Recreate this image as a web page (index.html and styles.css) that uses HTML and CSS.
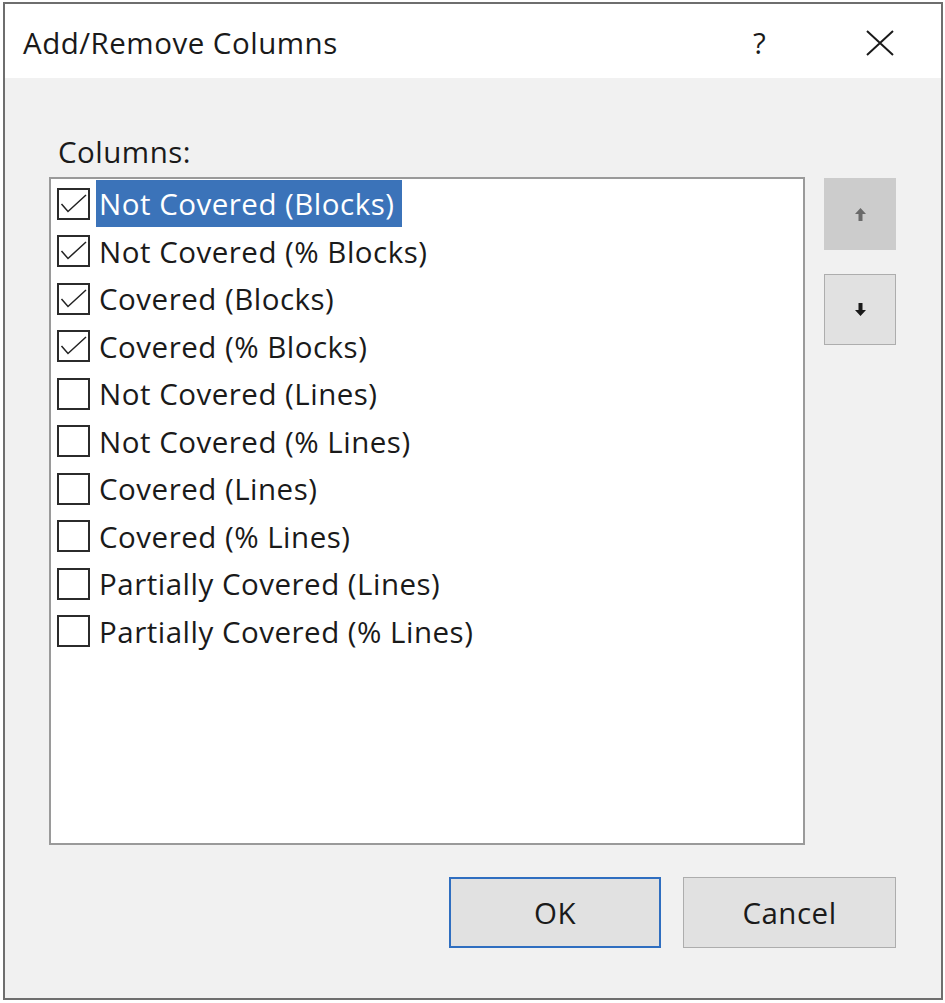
FILE: index.html
```html
<!DOCTYPE html>
<html>
<head>
<meta charset="utf-8">
<title>Add/Remove Columns</title>
<link rel="stylesheet" href="styles.css">
</head>
<body>
<div class="window">
  <div class="titlebar">
    <div class="title">Add/Remove Columns</div>
    <div class="help">?</div>
    <div class="close">
      <svg width="28" height="26" viewBox="0 0 28 26"><path d="M1 1 L27 25 M27 1 L1 25" stroke="#1a1a1a" stroke-width="2" fill="none"/></svg>
    </div>
  </div>
  <div class="content">
    <div class="label">Columns:</div>
    <div class="main">
      <div class="list">
        <div class="row"><span class="box checked"><svg viewBox="0 0 33 32" width="33" height="32"><polyline points="4.5,16 11,23.5 29,7" fill="none" stroke="#222" stroke-width="1.5"/></svg></span><span class="text selected">Not Covered (Blocks)</span></div>
        <div class="row"><span class="box checked"><svg viewBox="0 0 33 32" width="33" height="32"><polyline points="4.5,16 11,23.5 29,7" fill="none" stroke="#222" stroke-width="1.5"/></svg></span><span class="text">Not Covered (% Blocks)</span></div>
        <div class="row"><span class="box checked"><svg viewBox="0 0 33 32" width="33" height="32"><polyline points="4.5,16 11,23.5 29,7" fill="none" stroke="#222" stroke-width="1.5"/></svg></span><span class="text">Covered (Blocks)</span></div>
        <div class="row"><span class="box checked"><svg viewBox="0 0 33 32" width="33" height="32"><polyline points="4.5,16 11,23.5 29,7" fill="none" stroke="#222" stroke-width="1.5"/></svg></span><span class="text">Covered (% Blocks)</span></div>
        <div class="row"><span class="box"></span><span class="text">Not Covered (Lines)</span></div>
        <div class="row"><span class="box"></span><span class="text">Not Covered (% Lines)</span></div>
        <div class="row"><span class="box"></span><span class="text">Covered (Lines)</span></div>
        <div class="row"><span class="box"></span><span class="text">Covered (% Lines)</span></div>
        <div class="row"><span class="box"></span><span class="text">Partially Covered (Lines)</span></div>
        <div class="row"><span class="box"></span><span class="text">Partially Covered (% Lines)</span></div>
      </div>
      <div class="side">
        <div class="move up">
          <svg width="11" height="13" viewBox="0 0 11 13"><polygon points="5.5,0 11,6 7.5,6 7.5,13 3.5,13 3.5,6 0,6" fill="#6a6a6a"/></svg>
        </div>
        <div class="move down">
          <svg width="11" height="13" viewBox="0 0 11 13"><polygon points="5.5,13 11,7 7.5,7 7.5,0 3.5,0 3.5,7 0,7" fill="#1a1a1a"/></svg>
        </div>
      </div>
    </div>
    <div class="footer">
      <div class="btn ok">OK</div>
      <div class="btn">Cancel</div>
    </div>
  </div>
</div>
</body>
</html>
```

FILE: styles.css
```css
html, body {
  margin: 0;
  padding: 0;
  background: #ffffff;
}
body {
  font-family: "Open Sans", "Noto Sans", sans-serif;
  color: #1a1a1a;
  font-size: 29.5px;
  letter-spacing: 0.5px;
}
.window {
  margin: 2px 0 0 3px;
  width: 940px;
  height: 998px;
  box-sizing: border-box;
  border: 2px solid #6e6e6e;
  display: flex;
  flex-direction: column;
}
.titlebar {
  height: 74px;
  background: #ffffff;
  display: flex;
  align-items: center;
  padding-left: 18px;
}
.title {
  flex: 1;
  padding-top: 2px;
}
.help {
  width: 113px;
  padding-top: 2px;
}
.close {
  width: 75px;
  display: flex;
  padding-top: 4px;
}
.content {
  flex: 1;
  background: #f1f1f1;
  padding-left: 44px;
  display: flex;
  flex-direction: column;
}
.label {
  margin-top: 54px;
  height: 40px;
  line-height: 40px;
  padding-left: 9px;
}
.main {
  margin-top: 5px;
  display: flex;
  gap: 19px;
}
.list {
  width: 756px;
  height: 668px;
  box-sizing: border-box;
  border: 2px solid #9a9a9a;
  background: #ffffff;
  padding: 1px 0 0 6px;
}
.row {
  height: 47.5px;
  display: flex;
  align-items: center;
}
.box {
  width: 33px;
  height: 32px;
  box-sizing: border-box;
  border: 2px solid #2b2b2b;
  flex: none;
  position: relative;
}
.box svg {
  position: absolute;
  left: -2px;
  top: -2px;
}
.text {
  margin-left: 6px;
  height: 47px;
  line-height: 47px;
  padding: 0 8px 0 3px;
  white-space: nowrap;
}
.text.selected {
  background: #3b73b9;
  color: #ffffff;
}
.side {
  padding-top: 1px;
  display: flex;
  flex-direction: column;
  gap: 24px;
}
.move {
  width: 72px;
  height: 72px;
  box-sizing: border-box;
  display: flex;
  align-items: center;
  justify-content: center;
}
.move.up {
  background: #cccccc;
  border: 1px solid #cccccc;
}
.move.down {
  height: 71px;
  background: #e1e1e1;
  border: 1px solid #adadad;
}
.footer {
  margin-top: 32px;
  display: flex;
  justify-content: flex-end;
  gap: 22px;
  padding-right: 45px;
}
.btn {
  width: 213px;
  height: 71px;
  box-sizing: border-box;
  background: #e1e1e1;
  border: 1px solid #adadad;
  display: flex;
  align-items: center;
  justify-content: center;
}
.btn.ok {
  width: 212px;
  border: 2px solid #2f6ec0;
}
```
